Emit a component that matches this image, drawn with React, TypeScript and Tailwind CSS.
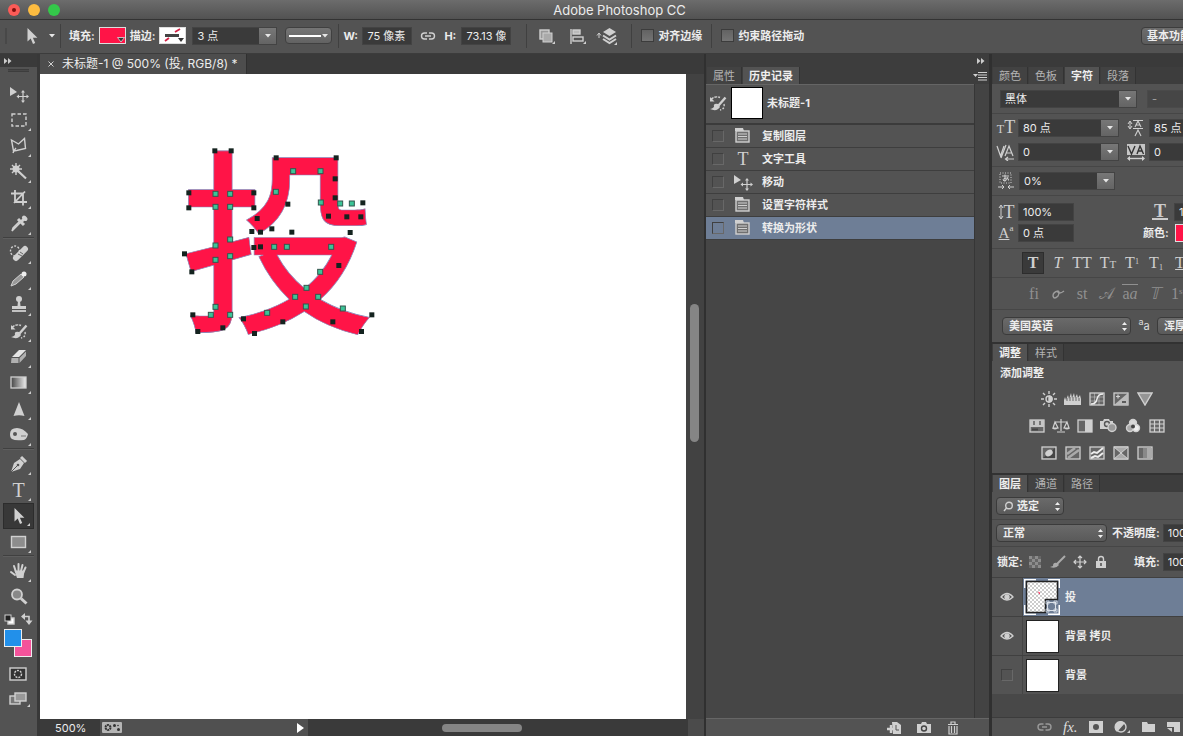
import { ReactNode } from "react";
import clsx from "clsx";

const panelBg = "bg-[#535353]";
const light = "#d0d0d0";

function Svg({ children, w = 20, h = 20, className = "" }: { children: ReactNode; w?: number; h?: number; className?: string }) {
  return (
    <svg width={w} height={h} viewBox={`0 0 ${w} ${h}`} fill="none" stroke={light} strokeWidth="1.4" className={clsx("shrink-0", className)}>
      {children}
    </svg>
  );
}

function Caret() {
  return (
    <svg width="6" height="4" viewBox="0 0 6 4" fill="#e6e6e6">
      <path d="M0 0h6L3 3.5z" />
    </svg>
  );
}

function Pointer() {
  return (
    <Svg w={18} h={20}>
      <path d="M4.500 2v13.500l3.200-3 2.300 5.500 2.200-1-2.300-5.200h4.500z" fill={light} stroke="none" />
    </Svg>
  );
}

function MoveIcon() {
  return (
    <Svg>
      <path d="M1 3v9l7-4z" fill={light} stroke="none" />
      <path d="M14 8v9M9.500 12.500h9" strokeWidth="1.200" />
      <path d="M14 6l2 2.500h-4zM14 19l2-2.500h-4zM7.500 12.500l2.500-2v4zM20 12.500l-2.500-2v4z" fill={light} stroke="none" />
    </Svg>
  );
}

function HistoryBrush() {
  return (
    <Svg>
      <path d="M3 6.500q4-4 9-2" strokeDasharray="3 1" />
      <path d="M2 4v4.500h4.500z" fill={light} stroke="none" />
      <path d="M17.500 4.500l-7 8" strokeWidth="2.400" />
      <path d="M10 11q-5-1-4 3-2 2-4 2 7 3 10-2z" fill={light} stroke="none" />
      <path d="M16 11q1 5-4 6" strokeDasharray="2 1.500" />
    </Svg>
  );
}

const tools: { name: string; icon: ReactNode; split?: boolean; noMore?: boolean }[] = [
  { name: "移动", icon: <MoveIcon />, noMore: true },
  { name: "选框", icon: <Svg><rect x="3" y="4" width="14" height="12" strokeDasharray="3.500 2" /></Svg> },
  { name: "套索", icon: <Svg><path d="M2.500 4l7 4 6-5.500 1 10-9 2-3 .500z" /><path d="M7 12q-2 2-3 5" /></Svg> },
  {
    name: "魔棒",
    icon: (
      <Svg>
        <path d="M7 1v12M1 7h12M3 3l8 8M11 3l-8 8" />
        <circle cx="7" cy="7" r="3.500" fill={light} stroke="none" />
        <path d="M9 9l8 7.500" strokeWidth="2.200" />
      </Svg>
    ),
  },
  { name: "裁剪", icon: <Svg><path d="M6 2v12h12M2 5.500h12v12M5 15L16 3.500" strokeWidth="1.800" /></Svg> },
  {
    name: "吸管",
    icon: (
      <Svg>
        <path d="M11.500 8.500L5 15l-2 2 1-3 6.500-6.500z" fill="#777" />
        <path d="M9 5l6 6M12 8l4-4" strokeWidth="3" />
        <path d="M15 3.500l1.500 1.500" strokeWidth="4" strokeLinecap="round" />
      </Svg>
    ),
  },
  {
    name: "修复画笔",
    split: true,
    icon: (
      <Svg>
        <ellipse cx="6" cy="8" rx="4.500" ry="5" strokeDasharray="2 1.500" />
        <path d="M7 15L16 6" strokeWidth="6" strokeLinecap="round" />
        <path d="M9 11l4 2M11 9l3 2" stroke="#666" strokeWidth="1" />
      </Svg>
    ),
  },
  {
    name: "画笔",
    icon: (
      <Svg>
        <path d="M2 17l2-5 8-7 3 3-8 7z" fill="#999" stroke={light} strokeWidth="1" />
        <circle cx="15" cy="5" r="2.500" fill="#eee" stroke="none" />
      </Svg>
    ),
  },
  {
    name: "图章",
    icon: (
      <Svg>
        <circle cx="10" cy="4" r="3" fill={light} stroke="none" />
        <path d="M9 6h2l.500 5H17v3H3v-3h5.500z" fill={light} stroke="none" />
        <path d="M3 16h14" strokeWidth="1.800" />
      </Svg>
    ),
  },
  { name: "历史记录画笔", icon: <HistoryBrush /> },
  {
    name: "橡皮擦",
    icon: (
      <Svg>
        <path d="M10 3h7l-7 7H3z" fill="#e4e4e4" stroke="none" />
        <path d="M2.500 11h7v5H2zM10.500 11L17 4.500V9l-6.500 7z" fill="#b0b0b0" stroke="none" />
      </Svg>
    ),
  },
  {
    name: "渐变",
    icon: (
      <Svg>
        <defs><linearGradient id="toolGradient"><stop stopColor="#444" /><stop offset="1" stopColor="#eee" /></linearGradient></defs>
        <rect x="2" y="4" width="15" height="11" fill="url(#toolGradient)" strokeWidth="1.300" />
      </Svg>
    ),
  },
  { name: "锐化", icon: <Svg><path d="M10 3l5.500 14q-5.500-1.500-11 0z" fill={light} stroke="none" /></Svg> },
  {
    name: "减淡",
    icon: (
      <Svg>
        <path d="M1 9q0-6 7-6 6 0 11 6-1 5-4 6-9 1-12-1-2-1-2-5z" fill={light} stroke="none" />
        <circle cx="6" cy="9" r="2" fill="#555" stroke="none" />
        <path d="M12 11h5" stroke="#777" strokeWidth="1" />
      </Svg>
    ),
  },
  {
    name: "钢笔",
    split: true,
    icon: (
      <Svg>
        <path d="M2 18l3-9 6-4 4 4-4 6z" fill={light} stroke="none" />
        <path d="M12 3l5 5" strokeWidth="3" />
        <path d="M2 18l6-6" stroke="#555" strokeWidth="1" />
        <circle cx="9" cy="11" r="1.300" fill="#555" stroke="none" />
      </Svg>
    ),
  },
  { name: "文字", icon: <span className="font-['Liberation_Serif',serif] text-xl leading-5 text-[#d0d0d0]">T</span> },
  { name: "路径选择", icon: <Pointer /> },
  { name: "矩形", icon: <Svg><rect x="2.500" y="4.500" width="14" height="11" fill="#8d8d8d" /></Svg> },
  {
    name: "抓手",
    split: true,
    icon: (
      <Svg>
        <path d="M7 11L5 5M9.500 10V3M12 10l1.500-6M14.500 11l2-4.500M6 14l-4-3" strokeWidth="2" strokeLinecap="round" />
        <path d="M5.500 9.500h10l-1 7.500H8z" fill={light} stroke="none" />
      </Svg>
    ),
  },
  {
    name: "缩放",
    noMore: true,
    icon: (
      <Svg>
        <circle cx="8" cy="7.500" r="5" fill="#888" strokeWidth="1.800" />
        <path d="M12 11.500l5.500 5" strokeWidth="3" />
      </Svg>
    ),
  },
];

function TitleBar() {
  return (
    <header className="flex h-5 shrink-0 items-center border-b border-[#333] bg-linear-to-b from-[#6c6c6c] to-[#525252] px-2">
      <div className="flex gap-2">
        <button aria-label="关闭" className="flex size-3 items-center justify-center rounded-full bg-[#fc5b57]"><i className="size-1 rounded-full bg-[#7d0e0c]" /></button>
        <button aria-label="最小化" className="size-3 rounded-full bg-[#fdbc40]" />
        <button aria-label="缩放窗口" className="size-3 rounded-full bg-[#34c84a]" />
      </div>
      <h1 className="flex-1 pl-1 text-center font-['Inter',sans-serif] text-[13px] font-normal">Adobe Photoshop CC</h1>
    </header>
  );
}

function Divider() {
  return <i className="h-6 w-px shrink-0 bg-[#404040]" />;
}

function Check({ label }: { label: string }) {
  return (
    <label className="flex shrink-0 items-center gap-1 font-bold">
      <input type="checkbox" className="size-[13px] appearance-none border border-[#3c3c3c] bg-linear-to-b from-[#626262] to-[#747474]" />
      {label}
    </label>
  );
}

function Field({ label, value, className, drop }: { label: string; value: string; className: string; drop?: boolean }) {
  return (
    <div className={clsx("flex h-[18px] shrink-0 border border-[#434343] bg-[#3a3a3a]", className)}>
      <input aria-label={label} defaultValue={value} className="w-0 min-w-0 flex-1 bg-transparent px-1 text-[#ececec] outline-none" />
      {drop && (
        <button aria-label={label + "选项"} className="flex w-[17px] items-center justify-center bg-linear-to-b from-[#777] to-[#646464]"><Caret /></button>
      )}
    </div>
  );
}

function OptionsBar() {
  return (
    <section className="flex h-[34px] shrink-0 items-center overflow-hidden border-b border-[#3c3c3c] bg-[#535353] pb-[2px] pl-[5px]">
      <i className="h-4 w-[2px] bg-[#484848]" />
      <button aria-label="路径选择工具" className="ml-4 flex items-center gap-2"><Pointer /><Caret /></button>
      <div className="ml-[5px] flex"><Divider /></div>
      <span className="ml-2 shrink-0 font-bold">填充:</span>
      <button aria-label="填充颜色" className="ml-1 flex h-[17px] w-[27px] shrink-0 items-end justify-end border border-[#ddd] bg-[#ff1447]">
        <svg width="8" height="6" viewBox="0 0 8 6" fill="#333" stroke="#ddd" strokeWidth=".800"><path d="M.500.500h7L4 5z" /></svg>
      </button>
      <span className="ml-1 shrink-0 font-bold">描边:</span>
      <button aria-label="描边颜色" className="ml-1 shrink-0">
        <svg width="27" height="17" viewBox="0 0 27 17">
          <rect x=".500" y=".500" width="26" height="16" fill="#fff" stroke="#ddd" />
          <path d="M6 14l4-3M16 5l5-3" stroke="#d22245" strokeWidth="1.800" />
          <path d="M6 8.500h14" stroke="#444" strokeWidth="3" />
          <path d="M19 11h6l-3 4z" fill="#333" />
        </svg>
      </button>
      <Field label="描边宽度" value="3 点" drop className="ml-[6px] w-[85px]" />
      <button aria-label="描边类型" className="ml-2 flex h-[17px] w-[47px] shrink-0 items-center gap-px rounded-sm border border-[#404040] bg-linear-to-b from-[#757575] to-[#626262] px-[3px]">
        <i className="h-[2px] flex-1 bg-white" /><Caret />
      </button>
      <div className="ml-[6px] flex"><Divider /></div>
      <span className="ml-1 w-[19px] shrink-0 font-bold">W:</span>
      <Field label="宽度" value="75 像素" className="w-[50px]" />
      <button aria-label="链接宽高" className="ml-2 shrink-0">
        <Svg w={16} h={12}><path d="M7 3H4.500a3 3 0 000 6H7M9 3h2.500a3 3 0 010 6H9M5 6h6" /></Svg>
      </button>
      <span className="ml-2 w-[17px] shrink-0 font-bold">H:</span>
      <Field label="高度" value="73.13 像素" className="w-[50px]" />
      <div className="ml-[15px] flex"><Divider /></div>
      <button aria-label="路径操作" className="ml-[11px]">
        <Svg w={18}><rect x="2" y="4" width="9" height="9" fill="#999" /><rect x="5" y="7" width="9" height="9" fill="#aaa" strokeWidth="1" /><path d="M17 15v3h-3z" fill={light} stroke="none" /></Svg>
      </button>
      <button aria-label="路径对齐" className="ml-[13px]">
        <Svg w={18}><path d="M2 3v15" /><rect x="4" y="4" width="7" height="4" fill="#bbb" /><rect x="4" y="11" width="10" height="4" fill="#555" /><path d="M17 15v3h-3z" fill={light} stroke="none" /></Svg>
      </button>
      <button aria-label="路径排列" className="ml-[9px]">
        <Svg w={22}>
          <path d="M7 6l6.500-4L20 6l-6.500 4z" fill={light} stroke="none" />
          <path d="M7 9.500l6.500 4 6.500-4M7 13l6.500 4 6.500-4" strokeWidth="2" />
          <path d="M3 12V8M1 9.500L3 7l2 2.500" strokeWidth="1" /><path d="M21 16v3h-3z" fill={light} stroke="none" />
        </Svg>
      </button>
      <div className="mr-[9px] ml-[13px] flex"><Divider /></div>
      <Check label="对齐边缘" />
      <div className="mr-[9px] ml-[9px] flex"><Divider /></div>
      <Check label="约束路径拖动" />
      <div className="ml-auto flex w-[42px] shrink-0 overflow-hidden">
        <button className="h-[18px] w-24 shrink-0 rounded-sm border border-[#3d3d3d] bg-linear-to-b from-[#6d6d6d] to-[#5c5c5c] pl-[5px] text-left leading-4 font-bold">基本功能</button>
      </div>
    </section>
  );
}

function Toolbar() {
  return (
    <nav className={clsx("flex w-10 shrink-0 flex-col border-r-[3px] border-[#383838]", panelBg)}>
      <div className="flex h-[13px] shrink-0 items-center bg-[#3a3a3a] pl-1"><Collapse /></div>
      <i className="mx-2 mt-[2px] mb-[9px] h-[3px] border-y border-[#3d3d3d] bg-[#484848]" />
      {tools.map((t, i) => (
        <div key={t.name} className="px-[3px]">
          {t.split && <i className="mb-px block h-[2px] border-t border-[#404040] bg-[#5e5e5e]" />}
          <button
            aria-label={t.name}
            className={clsx("relative flex h-[26px] w-[31px] items-center justify-center", i === 16 && "border border-[#2c2c2c] bg-[#383838]")}
          >
            {t.icon}
            {!t.noMore && <svg className="absolute right-[3px] bottom-[2px]" width="3" height="3" fill="#ccc"><path d="M3 0v3H0z" /></svg>}
          </button>
        </div>
      ))}
      <div className="flex h-[18px] items-center justify-between px-1">
        <Svg w={11} h={11}><rect x="4" y="4" width="6" height="6" fill="#fff" /><rect x="1" y="1" width="6" height="6" fill="#222" strokeWidth="1" /></Svg>
        <Svg w={12} h={12}><path d="M3 3.500h5v5" strokeWidth="1.600" /><path d="M4 0v7L0 3.500zM4.500 7.500h7L8 12z" fill={light} stroke="none" /></Svg>
      </div>
      <svg width="30" height="30" viewBox="0 0 30 30" className="ml-[3px]" stroke="#eee">
        <rect x="11.500" y="11.500" width="17" height="17" fill="#f4539b" />
        <rect x="1.500" y="1.500" width="17" height="17" fill="#2290ea" />
      </svg>
      <button aria-label="快速蒙版" className="mt-2 ml-[9px]">
        <Svg w={18} h={16}><rect x="1" y="2" width="16" height="12" fill="#333" /><circle cx="9" cy="8" r="3.500" strokeDasharray="2 1" /></Svg>
      </button>
      <button aria-label="屏幕模式" className="mt-2 ml-2">
        <Svg w={22} h={18}><rect x="2" y="6" width="10" height="8" fill="#777" /><rect x="7" y="3" width="11" height="8" fill="#999" /><path d="M22 14v3h-3z" fill={light} stroke="none" /></Svg>
      </button>
    </nav>
  );
}

function Collapse() {
  return <svg width="8" height="6" viewBox="0 0 8 6" fill="#ccc"><path d="M0 0l3.500 3L0 6zM4 0l3.500 3L4 6z" /></svg>;
}

// anchor points of the shape path: dark on the outer contour, teal where strokes meet
const darkAnchors = [
  [134, 62], [183, 62], [56, 188], [56, 233], [251, 188], [251, 233], [318, 83], [498, 83], [495, 146], [495, 203],
  [578, 218], [572, 260], [475, 258], [530, 260], [261, 265], [305, 296], [353, 222], [245, 304], [251, 352], [43, 371],
  [65, 425], [271, 306], [271, 350], [365, 306], [540, 307], [506, 406], [605, 554], [574, 604], [488, 575], [220, 566],
  [253, 610], [338, 575], [68, 554], [83, 604], [158, 593],
];
const tealAnchors = [
  [136, 191], [180, 191], [136, 230], [180, 230], [317, 185], [369, 123], [451, 123], [452, 217], [510, 220], [545, 220],
  [180, 328], [136, 346], [180, 378], [136, 389], [312, 350], [350, 350], [483, 350], [450, 425], [409, 473], [375, 500],
  [444, 500], [407, 529], [291, 548], [518, 535], [136, 530], [122, 554], [180, 554],
];

function Artwork() {
  return (
    <svg width="220" height="220" viewBox="0 0 660 660">
      <text x="30" y="562" fontSize="590" fontWeight="500" fontFamily="'Noto Sans CJK SC', sans-serif" fill="#ff1447" stroke="#8a87b8" strokeWidth="2">投</text>
      {darkAnchors.map(([x, y]) => <rect key={`${x}-${y}`} x={x - 7} y={y - 7} width="15" height="15" fill="#14231f" />)}
      {tealAnchors.map(([x, y]) => <rect key={`${x}-${y}`} x={x - 7} y={y - 7} width="15" height="15" fill="#3cc497" stroke="#35564e" strokeWidth="3" />)}
    </svg>
  );
}

function Document() {
  return (
    <main className="flex min-w-0 flex-1 flex-col bg-[#3a3a3a]">
      <div className="flex h-5 shrink-0">
        <div className="flex items-center gap-2 border-r border-[#303030] bg-[#4d4d4d] px-2 text-xs">
          <button aria-label="关闭文档"><Svg w={6} h={6}><path d="M.500.500l5 5M5.500.500l-5 5" strokeWidth="1" /></Svg></button>
          <span>未标题-1 @ 500% (投, RGB/8) *</span>
        </div>
      </div>
      <div className="flex min-h-0 flex-1">
        <div className="flex-1 bg-white pt-14 pl-[130px]"><Artwork /></div>
        <div className="w-[18px] bg-[#424242] px-1 pt-[230px]"><div className="h-[138px] w-[9px] rounded-full bg-[#858585]" /></div>
      </div>
      <footer className="flex h-[17px] shrink-0 items-center">
        <span className="w-[60px] pl-[15px]">500%</span>
        <div className="flex h-full w-[208px] items-center justify-between bg-[#505050] pr-1">
          <svg width="20" height="11" viewBox="0 0 20 11" className="ml-[2px]">
            <rect width="20" height="11" rx="1" fill="#b5b5b5" />
            <circle cx="6" cy="5.500" r="2.500" fill="none" stroke="#333" strokeWidth="2" strokeDasharray="2 .600" />
            <circle cx="12.500" cy="3.500" r="1.500" fill="#333" /><circle cx="16.500" cy="7.500" r="1.500" fill="#333" /><circle cx="16" cy="3.500" r=".800" fill="#333" />
          </svg>
          <svg width="7" height="10" viewBox="0 0 7 10" fill="#fff"><path d="M0 0l7 5-7 5z" /></svg>
        </div>
        <div className="flex flex-1 justify-center pr-8"><div className="h-2 w-20 rounded-full bg-[#858585]" /></div>
        <i className="h-full w-4 bg-[#4b4b4b]" />
      </footer>
    </main>
  );
}

function Tabs({ names, active }: { names: string[]; active: string }) {
  return (
    <div role="tablist" className="flex h-[17px] shrink-0 gap-px bg-[#3d3d3d] pl-px">
      {names.map((n) => (
        <button
          key={n}
          role="tab"
          aria-selected={n === active}
          className={clsx("shrink-0 border-r border-[#333] px-[6px] pt-[2px] leading-[15px]", n === active ? "bg-[#535353] font-bold text-[#efefef]" : "bg-[#424242] text-[#b4b4b4]")}
        >
          {n}
        </button>
      ))}
    </div>
  );
}

function DocIcon() {
  return (
    <Svg w={18} h={18}>
      <path d="M1 1h8l1 3H1z" fill={light} stroke="none" />
      <rect x="2" y="4" width="13" height="11" fill="#707070" />
      <path d="M4 7h9M4 9.500h9M4 12h9" strokeWidth="1" />
    </Svg>
  );
}

function HistoryPanel() {
  const states = [
    { name: "复制图层", icon: <DocIcon /> },
    { name: "文字工具", icon: <span className="font-['Liberation_Serif',serif] text-lg leading-5 font-normal text-[#d0d0d0]">T</span> },
    { name: "移动", icon: <MoveIcon /> },
    { name: "设置字符样式", icon: <DocIcon /> },
    { name: "转换为形状", icon: <DocIcon /> },
  ];
  return (
    <aside className="flex w-[287px] shrink-0 flex-col border-x-2 border-[#303030] bg-[#3d3d3d]">
      <div className="flex h-[13px] shrink-0 items-center justify-end pr-1"><Collapse /></div>
      <div className="flex shrink-0 items-center justify-between bg-[#3d3d3d]">
        <Tabs names={["属性", "历史记录"]} active="历史记录" />
        <Svg w={16} h={10}><path d="M0 3h5L2.500 6z" fill={light} stroke="none" /><path d="M5 1.500h9M5 4h9M5 6.500h9M5 9h9" strokeWidth="1" /></Svg>
      </div>
      <div className="flex min-h-0 flex-1">
        <div className="flex flex-1 flex-col border-t border-[#656565] bg-[#464646]">
          <div className={clsx("flex h-10 items-center border-b-2 border-[#3b3b3b] pb-[2px] pl-[2px] font-bold", panelBg)}>
            <HistoryBrush />
            <i className="mr-1 ml-[3px] size-8 border border-black bg-white" />
            未标题-1
          </div>
          <ul>
            {states.map((s, i) => (
              <li key={s.name} className={clsx("flex h-[23px] items-center border-b border-[#3e3e3e] font-bold", i === 4 ? "bg-[#6e7e96]" : "bg-[#535353]")}>
                <input type="checkbox" aria-label={"源:" + s.name} className="ml-[6px] size-3 appearance-none border border-t-[#404040] border-r-[#686868] border-b-[#686868] border-l-[#404040]" />
                <span className="mx-[9px] flex w-5 justify-center">{s.icon}</span>
                {s.name}
              </li>
            ))}
          </ul>
        </div>
        <i className="w-[15px] border-l border-[#363636] bg-[#434343]" />
      </div>
      <footer className={clsx("flex h-[18px] shrink-0 items-center justify-end gap-[14px] border-t border-[#666] pr-[29px]", panelBg)}>
        <button aria-label="从当前状态创建新文档"><Svg w={16} h={14}><path d="M6 1h5l4 3v9H7z" fill={light} stroke="none" /><path d="M5 4v8M1 8h8" strokeWidth="2.400" /><path d="M10 4v5h3" stroke="#555" strokeWidth="1" /></Svg></button>
        <button aria-label="创建新快照"><Svg w={16} h={14}><path d="M1 3h4l1-2h4l1 2h4v9H1z" fill={light} stroke="none" /><circle cx="8" cy="7.500" r="2.500" stroke="#444" /></Svg></button>
        <button aria-label="删除"><Svg w={14} h={14}><path d="M2 3.500h10M5 3V1h4v2M3 5v8h8V5M5.500 5v7M8.500 5v7" strokeWidth="1.200" /></Svg></button>
      </footer>
    </aside>
  );
}

function Sel({ label, value, className, pad = "pl-[6px]" }: { label: string; value: string; className: string; pad?: string }) {
  return (
    <div className={clsx("relative h-[18px] shrink-0", className)}>
      <select aria-label={label} className={clsx("h-full w-full appearance-none rounded-sm border border-[#3b3b3b] bg-linear-to-b from-[#6a6a6a] to-[#5a5a5a] leading-4 font-bold outline-none", pad)}>
        <option>{value}</option>
      </select>
      <svg className="absolute top-[5px] right-1" width="5" height="9" viewBox="0 0 5 9" fill="#eee"><path d="M2.500 0L5 3H0zM2.500 9L5 6H0z" /></svg>
    </div>
  );
}

const typeIcon = "flex w-6 shrink-0 items-center justify-center font-['Liberation_Serif',serif] leading-4 text-[#cfcfcf]";
const rule = "border-b border-[#464646]";

function CharacterPanel() {
  return (
    <section className={clsx("h-[275px] shrink-0 overflow-hidden", panelBg)}>
      <Tabs names={["颜色", "色板", "字符", "段落"]} active="字符" />
      <div className={clsx("flex h-[30px] items-center gap-[10px] pl-2", rule)}>
        <Field label="字体" value="黑体" drop className="w-[137px]" />
        <Field label="字体样式" value="-" className="w-[80px] opacity-50" />
      </div>
      <div className={clsx("flex h-[53px] flex-col justify-center gap-[6px] pl-[2px]", rule)}>
        <div className="flex h-[18px] items-center">
          <span className={typeIcon}><span className="text-lg leading-4"><small className="text-xs">T</small>T</span></span>
          <Field label="字体大小" value="80 点" drop className="w-[101px]" />
          <span className="ml-1 flex w-[26px] shrink-0 justify-center">
            <Svg w={18} h={18}><path d="M3 3v6M1 5l2-3 2 3M1 7l2 3 2-3" strokeWidth="1" /><path d="M6 1.500h10M6 9.500h10M8 8l3-6 3 6M9 6h4M8 17l3-6 3 6" strokeWidth="1.100" /></Svg>
          </span>
          <Field label="行距" value="85 点" drop className="w-[90px]" />
        </div>
        <div className="flex h-[18px] items-center">
          <span className={typeIcon}>
            <Svg w={20} h={18}><path d="M1 3l3.500 10L8 3M5 15l5-13M9 13l4-10 4 10M10.500 10h5M10 16h8M12 14l-2.500 2 2.500 2" strokeWidth="1.200" /></Svg>
          </span>
          <Field label="字距微调" value="0" drop className="w-[101px]" />
          <span className="ml-1 flex w-[26px] shrink-0 justify-center">
            <Svg w={20} h={18}>
              <rect x="1" y="1" width="18" height="11" fill="#c5c5c5" stroke="none" />
              <path d="M2 3l3.500 8L9 3M11 11l3-8 3.500 8M12 8h4" stroke="#333" />
              <path d="M2 15.500h16" /><path d="M4 13v5l-3-2.500zM16 13v5l3-2.500z" fill={light} stroke="none" />
            </Svg>
          </span>
          <Field label="字距调整" value="0" drop className="w-[90px]" />
        </div>
      </div>
      <div className={clsx("flex h-[29px] items-center pl-[2px]", rule)}>
        <span className={typeIcon}>
          <Svg w={18} h={18}>
            <rect x="3" y="1" width="11" height="10" strokeDasharray="1 1.500" strokeWidth="1" />
            <path d="M5 4h7M8 2.500v7M11 5q-1 4-4 4-2-1 0-2.500 5-1.500 4.500 2" strokeWidth="1" />
            <path d="M1 15h6M17 15h-6M5 13l2 2-2 2M13 13l-2 2 2 2" strokeWidth="1" />
          </Svg>
        </span>
        <Field label="比例间距" value="0%" drop className="ml-[1px] w-[96px]" />
      </div>
      <div className={clsx("flex h-[53px] flex-col justify-center gap-[3px] pl-[2px]", rule)}>
        <div className="flex h-[18px] items-center">
          <span className={typeIcon}>
            <Svg w={6} h={16}><path d="M3 2v12M1 4l2-3 2 3M1 12l2 3 2-3" strokeWidth="1" /></Svg><span className="text-lg leading-4">T</span>
          </span>
          <Field label="垂直缩放" value="100%" className="w-[56px]" />
          <span className="ml-[78px] border-b-2 border-[#ccc] px-[2px] font-['Liberation_Serif',serif] text-lg leading-[14px] font-bold text-[#ccc]">T</span>
          <Field label="水平缩放" value="100%" className="ml-[6px] w-[56px]" />
        </div>
        <div className="flex h-[18px] items-center">
          <span className={clsx(typeIcon, "text-[15px]")}><u>A</u><sup className="text-[9px]">a</sup></span>
          <Field label="基线偏移" value="0 点" className="w-[56px]" />
          <span className="ml-[69px] shrink-0 font-bold">颜色:</span>
          <button aria-label="文字颜色" className="ml-[6px] h-[18px] w-14 shrink-0 border border-[#ddd] bg-[#ff1447]" />
        </div>
      </div>
      <div className={clsx("flex h-[29px] items-center pl-[30px] font-['Liberation_Serif',serif] text-base text-[#cfcfcf]", rule)}>
        <button className="mr-1 h-[22px] w-[22px] shrink-0 border border-[#2d2d2d] bg-[#3a3a3a] leading-5 font-bold">T</button>
        <button className="w-5 shrink-0 italic">T</button>
        <button className="w-7 shrink-0">TT</button>
        <button className="w-6 shrink-0">T<small className="text-[11px]">T</small></button>
        <button className="w-6 shrink-0">T<sup className="text-[8px]">1</sup></button>
        <button className="w-6 shrink-0">T<sub className="text-[8px]">1</sub></button>
        <button className="w-6 shrink-0 underline">T</button>
      </div>
      <div className={clsx("flex h-8 items-center pl-[30px] font-['Liberation_Serif',serif] text-base text-[#909090]", rule)}>
        <button className="w-6 shrink-0">fi</button>
        <button aria-label="上下文替代字" className="flex w-6 shrink-0 justify-center"><Svg w={16} h={14} className="opacity-60"><path d="M8 4q-5 1-5 5 1 4 5 0 2-4 0-5M7 4q2 4 7 0" /></Svg></button>
        <button className="w-6 shrink-0">st</button>
        <button className="w-6 shrink-0">&#x1D49C;</button>
        <button className="w-6 shrink-0"><span className="border-t border-[#909090]">a</span><i className="border-t border-[#909090]">a</i></button>
        <button className="w-6 shrink-0 italic">&#x1D54B;</button>
        <button className="w-6 shrink-0">1<sup className="text-[9px]">st</sup></button>
      </div>
      <div className="flex h-[31px] items-center pl-[10px]">
        <Sel label="语言" value="美国英语" className="w-[129px]" />
        <span className="mx-1 w-[18px] shrink-0 text-center text-[#ddd]"><sup className="text-[9px]">a</sup>a</span>
        <Sel label="消除锯齿" value="浑厚" className="w-[80px]" />
      </div>
    </section>
  );
}

function Box({ children }: { children?: ReactNode }) {
  return <Svg w={16} h={14}><rect x="1" y="1" width="14" height="12" fill="#666" strokeWidth="1.300" />{children}</Svg>;
}

function AdjustPanel() {
  const rows: [string, ReactNode][][] = [
    [
      ["亮度/对比度", <Svg w={16} h={16}><circle cx="8" cy="8" r="3" /><path d="M8 5v6q3-1 3-3t-3-3" fill={light} /><path d="M8 0v3M8 13v3M0 8h3M13 8h3M2 2l2 2M12 12l2 2M2 14l2-2M12 4l2-2" /></Svg>],
      ["色阶", <Svg w={18} h={14}><path d="M0 13V8l1-3 1 3 2-5 1 4 2-6 1 5 2-5 1 5 2-4 1 4 2-3 1 4v6z" fill={light} stroke="none" /><path d="M3 9V6M6 9V5M9 9V5M12 9V5M15 9V6" stroke="#666" strokeWidth="1" /></Svg>],
      ["曲线", <Box><path d="M1 5h14M1 9h14M5.500 1v12M10 1v12" strokeWidth=".500" /><path d="M2 12q5 0 6-5t6-5" stroke="#eee" /></Box>],
      ["曝光度", <Box><path d="M15 1v12H1z" fill="#bbb" stroke="none" /><path d="M3 4.500h4M5 2.500v4" strokeWidth="1.200" /><path d="M9 10h4" stroke="#333" /></Box>],
      ["自然饱和度", <Svg w={16} h={14}><path d="M1 1h14L8 13z" fill="#959595" /></Svg>],
    ],
    [
      ["色相/饱和度", <Box><path d="M1 1h14v7H1z" fill="#c5c5c5" stroke="none" /><path d="M5 2v4M11 2v4" stroke="#777" strokeWidth="2" /><path d="M3 10.500h6" stroke="#444" strokeWidth="2" /></Box>],
      ["色彩平衡", <Svg w={18} h={14}><path d="M9 0v12M3 3h12M5 13h8M3 3L1 9h5zM15 3l-3 6h5z" strokeWidth="1.200" /><path d="M0 9h6q-3 3-6 0zM12 9h6q-3 3-6 0z" fill={light} stroke="none" /></Svg>],
      ["黑白", <Box><path d="M8 1h7v12H8z" fill={light} stroke="none" /></Box>],
      ["照片滤镜", <Svg w={18} h={15}><path d="M0 3h3l1-2h5l1 2h3v8H0z" fill={light} stroke="none" /><circle cx="7" cy="6" r="2.500" stroke="#555" /><circle cx="12" cy="9.500" r="4" fill="#999" /></Svg>],
      ["通道混合器", <Svg w={16} h={16}><circle cx="8" cy="5" r="3.500" fill="#d8d8d8" /><circle cx="5" cy="10" r="3.500" fill="#aaa" /><circle cx="11" cy="10" r="3.500" fill="#eee" /><circle cx="8" cy="8.500" r="2" fill="#444" stroke="none" /></Svg>],
      ["颜色查找", <Box><path d="M1 5h14M1 9h14M5.500 1v12M10.500 1v12" strokeWidth="1.200" /></Box>],
    ],
    [
      ["反相", <Box><path d="M2 12L14 2v10z" fill="#444" stroke="none" /><ellipse cx="8" cy="7" rx="4" ry="3" fill={light} stroke="none" transform="rotate(-35 8 7)" /></Box>],
      ["色调分离", <Box><path d="M2 8l8-6M3 12L14 4" stroke="#aaa" strokeWidth="2.500" /></Box>],
      ["阈值", <Box><path d="M2 8l3-2 3 1 6-5M2 12l4-2 3 1 5-4" stroke="#eee" strokeWidth="2" /></Box>],
      ["可选颜色", <Box><path d="M1 1l7 6 7-6zM1 13l7-6 7 6z" fill="#aaa" strokeWidth="1" /></Box>],
      ["渐变映射", <Box><path d="M6 2h4v10H6z" fill="#888" stroke="none" /><path d="M10 2h4v10h-4z" fill="#aaa" stroke="none" /></Box>],
    ],
  ];
  return (
    <section className={clsx("mt-[2px] h-[129px] shrink-0 overflow-hidden", panelBg)}>
      <Tabs names={["调整", "样式"]} active="调整" />
      <h2 className="mt-1 mb-1 pl-2 leading-4 font-bold">添加调整</h2>
      <div className="flex w-[217px] flex-col items-center pr-2">
        {rows.map((row, i) => (
          <div key={i} className="flex h-[27px] items-center">
            {row.map(([name, icon]) => <button key={name} aria-label={name} className="flex w-6 shrink-0 justify-center">{icon}</button>)}
          </div>
        ))}
      </div>
    </section>
  );
}

function Eye() {
  return (
    <Svg w={14} h={12}><path d="M1 6q6-7 12 0-6 6-12 0z" strokeWidth="1.300" /><circle cx="7" cy="6" r="2" fill={light} /></Svg>
  );
}

function LayersPanel() {
  const layers = [
    { name: "投", visible: true, shape: true },
    { name: "背景 拷贝", visible: true },
    { name: "背景", visible: false },
  ];
  return (
    <section className="mt-[2px] flex min-h-0 flex-1 flex-col overflow-hidden bg-[#484848]">
      <Tabs names={["图层", "通道", "路径"]} active="图层" />
      <div className={clsx("shrink-0", panelBg)}>
        <div className={clsx("flex h-7 items-center pl-1", rule)}>
          <div className="relative w-[68px]">
            <Sel label="图层过滤" value="选定" className="w-full" pad="pl-5" />
            <Svg w={11} h={11} className="pointer-events-none absolute top-1 left-[7px]"><circle cx="6" cy="4.500" r="3.300" /><path d="M3.500 7L1 10" /></Svg>
          </div>
        </div>
        <div className={clsx("flex h-[27px] items-center pl-1", rule)}>
          <Sel label="混合模式" value="正常" className="w-[111px]" />
          <span className="ml-[5px] shrink-0 font-bold">不透明度:</span>
          <Field label="不透明度" value="100%" drop className="ml-[3px] w-[60px]" />
        </div>
        <div className="flex h-[30px] items-center pl-[5px]">
          <span className="w-8 shrink-0 font-bold">锁定:</span>
          <button aria-label="锁定透明像素" className="mr-[9px]"><svg width="12" height="12" viewBox="0 0 12 12" fill="#8c8c8c"><path d="M0 0h12v12H0z" fill="#666" /><path d="M0 0h3v3H0zM6 0h3v3H6zM3 3h3v3H3zM9 3h3v3H9zM0 6h3v3H0zM6 6h3v3H6zM3 9h3v3H3zM9 9h3v3H9z" /></svg></button>
          <button aria-label="锁定图像像素" className="mr-[7px]"><Svg w={16} h={14}><path d="M15 1L7 9" stroke="#aaa" strokeWidth="2" /><path d="M7 8q-4-1-4 3l-3 1q6 2 9-2z" fill="#aaa" stroke="none" /></Svg></button>
          <button aria-label="锁定位置" className="mr-2"><Svg w={14} h={14}><path d="M7 1v12M1 7h12M5 3l2-2 2 2M5 11l2 2 2-2M3 5L1 7l2 2M11 5l2 2-2 2" strokeWidth="1.200" /></Svg></button>
          <button aria-label="锁定全部"><Svg w={12} h={14}><path d="M3.500 7V4a2.500 2.500 0 015 0v3" /><rect x="1" y="6" width="10" height="7" fill={light} stroke="none" /><path d="M6 8v3" stroke="#444" /></Svg></button>
          <span className="ml-[27px] shrink-0 font-bold">填充:</span>
          <Field label="填充" value="100%" drop className="ml-[3px] w-[60px]" />
        </div>
      </div>
      <ul className="flex-1">
        {layers.map((l) => (
          <li key={l.name} className={clsx("flex h-[39px] border-t border-[#404040] font-bold", l.shape ? "bg-[#6e7e96]" : "bg-[#535353]")}>
            <button aria-label={"可见性:" + l.name} className="flex w-[31px] shrink-0 items-center justify-center border-r border-[#444] bg-[#535353]">
              {l.visible ? <Eye /> : <i className="size-3 border border-t-[#404040] border-r-[#686868] border-b-[#686868] border-l-[#404040]" />}
            </button>
            <span className="flex w-[38px] shrink-0 items-center justify-center">
              {l.shape ? <ShapeThumb /> : <i className="size-[33px] border border-[#222] bg-white" />}
            </span>
            <span className="self-center pl-1">{l.name}</span>
          </li>
        ))}
      </ul>
      <footer className={clsx("flex h-[19px] shrink-0 items-center gap-[11px] border-t border-[#3c3c3c] pl-[45px]", panelBg)}>
        <button aria-label="链接图层"><Svg w={15} h={10}><path d="M6.500 2H4a3 3 0 000 6h2.500M8.500 2H11a3 3 0 010 6H8.500M5 5h5" stroke="#999" /></Svg></button>
        <button aria-label="图层样式" className="font-['Liberation_Serif',serif] text-[15px] leading-4 text-[#ddd] italic">fx.</button>
        <button aria-label="添加蒙版"><Svg w={14} h={12}><rect width="14" height="12" fill={light} stroke="none" /><circle cx="7" cy="6" r="3" fill="#555" stroke="none" /></Svg></button>
        <button aria-label="调整图层"><Svg w={17} h={12}><circle cx="7" cy="6" r="5" /><path d="M3 10a5 5 0 017-8z" fill={light} /><path d="M16 9v3h-3z" fill={light} stroke="none" /></Svg></button>
        <button aria-label="新建组"><Svg w={14} h={12}><path d="M0 1h5l1 2h7v8H0z" fill={light} stroke="none" /></Svg></button>
        <button aria-label="新建图层"><Svg w={14} h={12}><path d="M0 1h13v10H7V6H0z" fill={light} stroke="none" /><path d="M0 7h5v4z" fill={light} stroke="none" /></Svg></button>
      </footer>
    </section>
  );
}

function ShapeThumb() {
  return (
    <svg width="36" height="36" viewBox="0 0 36 36">
      <defs>
        <pattern id="checker" width="4" height="4" patternUnits="userSpaceOnUse"><path d="M0 0h4v4H0z" fill="#fff" /><path d="M0 0h2v2H0zM2 2h2v2H2z" fill="#ccc" /></pattern>
      </defs>
      <path d="M.500 9V.500H12M24 .500h11.500V9M.500 26v9.500H12M24 35.500h11.500V26" fill="none" stroke="#fff" strokeWidth="2" />
      <path d="M2.500 2.500h31v18h-12v13h-19z" fill="url(#checker)" stroke="#222" strokeWidth="1.500" />
      <path d="M14 13l2 1-1 1" stroke="#ff1447" strokeWidth=".800" fill="none" />
      <rect x="23.500" y="23.500" width="8" height="8" fill="none" stroke="#dce2ea" />
      <path d="M22 22h3v3h-3zM30 22h3v3h-3zM22 30h3v3h-3zM30 30h3v3h-3z" fill="none" stroke="#dce2ea" strokeWidth=".800" />
    </svg>
  );
}

export default function App() {
  return (
    <div className="flex h-screen flex-col overflow-hidden bg-[#3a3a3a] font-['Inter','Noto_Sans_CJK_SC',sans-serif] text-[11px] leading-4 whitespace-nowrap text-[#ececec]">
      <TitleBar />
      <OptionsBar />
      <div className="flex min-h-0 flex-1">
        <Toolbar />
        <Document />
        <HistoryPanel />
        <aside className="flex w-48 shrink-0 flex-col overflow-hidden border-l border-[#303030] bg-[#323232]">
          <i className="h-[13px] shrink-0 bg-[#3a3a3a]" />
          <CharacterPanel />
          <AdjustPanel />
          <LayersPanel />
        </aside>
      </div>
    </div>
  );
}
